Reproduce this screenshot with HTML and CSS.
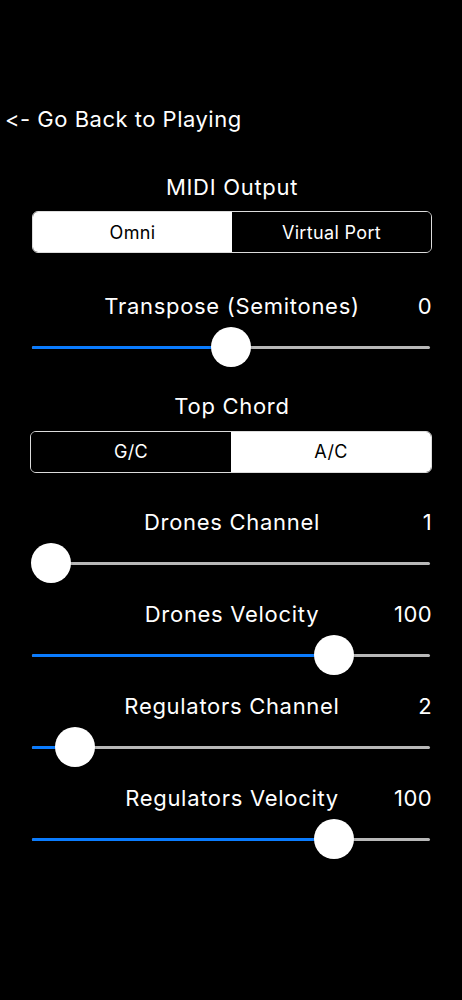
FILE: index.html
```html
<!DOCTYPE html>
<html lang="en">
<head>
<meta charset="utf-8">
<title>Settings</title>
<link rel="stylesheet" href="styles.css">
</head>
<body>
<main class="screen">
  <a class="back" href="#">&lt;- Go Back to Playing</a>
  <section class="settings">
    <h2 class="title title-midi">MIDI Output</h2>
    <div class="segmented seg-midi">
      <span class="seg selected">Omni</span>
      <span class="seg">Virtual Port</span>
    </div>

    <div class="field field-first">
      <div class="label-row"><span class="label">Transpose (Semitones)</span><span class="value">0</span></div>
      <div class="slider"><div class="track"></div><div class="fill" style="width:199px"></div><div class="thumb" style="left:179px"></div></div>
    </div>

    <h2 class="title title-chord">Top Chord</h2>
    <div class="segmented seg-chord">
      <span class="seg">G/C</span>
      <span class="seg selected">A/C</span>
    </div>

    <div class="field field-after-seg">
      <div class="label-row"><span class="label">Drones Channel</span><span class="value">1</span></div>
      <div class="slider"><div class="track"></div><div class="fill" style="width:19px"></div><div class="thumb" style="left:-1px"></div></div>
    </div>

    <div class="field">
      <div class="label-row"><span class="label">Drones Velocity</span><span class="value">100</span></div>
      <div class="slider"><div class="track"></div><div class="fill" style="width:302px"></div><div class="thumb" style="left:282px"></div></div>
    </div>

    <div class="field">
      <div class="label-row"><span class="label">Regulators Channel</span><span class="value">2</span></div>
      <div class="slider"><div class="track"></div><div class="fill" style="width:43px"></div><div class="thumb" style="left:23px"></div></div>
    </div>

    <div class="field">
      <div class="label-row"><span class="label">Regulators Velocity</span><span class="value">100</span></div>
      <div class="slider"><div class="track"></div><div class="fill" style="width:302px"></div><div class="thumb" style="left:282px"></div></div>
    </div>
  </section>
</main>
</body>
</html>
```

FILE: styles.css
```css
* { box-sizing: border-box; }
html, body { margin: 0; padding: 0; background: #000; }
body {
  width: 462px;
  min-height: 1000px;
  color: #fff;
  font-family: Inter, "Liberation Sans", sans-serif;
  font-feature-settings: "calt" 0, "liga" 0;
  font-variant-ligatures: none;
  -webkit-font-smoothing: antialiased;
}
.screen {
  display: flex;
  flex-direction: column;
  padding-top: 106px;
}
.back {
  display: block;
  padding-left: 5px;
  font-size: 22px;
  line-height: 26px;
  letter-spacing: 0.5px;
  color: #fff;
  text-decoration: none;
}
.settings {
  display: flex;
  flex-direction: column;
  width: 400px;
  margin-left: 32px;
}
.title {
  margin: 0;
  font-size: 22px;
  font-weight: 400;
  line-height: 26px;
  letter-spacing: 0.7px;
  text-align: center;
}
.title-midi { margin-top: 42px; }
.title-chord { margin-top: 26px; }

.segmented {
  display: flex;
  height: 42px;
  margin-top: 11px;
  border: 1.5px solid #dcdcdc;
  border-radius: 6px;
  overflow: hidden;
}
.seg-chord {
  margin-top: 11.5px;
  margin-left: -2px;
  width: 402px;
}
.seg {
  flex: 1;
  display: flex;
  align-items: center;
  justify-content: center;
  font-size: 18px;
  letter-spacing: 0.35px;
  color: #fff;
  background: #000;
}
.seg.selected {
  background: #fff;
  color: #000;
}

.field {
  display: flex;
  flex-direction: column;
  gap: 8px;
  margin-top: 18px;
}
.field-first { margin-top: 40px; }
.field-after-seg { margin-top: 36.5px; }

.label-row {
  display: grid;
  grid-template-columns: 1fr auto 1fr;
  font-size: 22px;
  line-height: 26px;
  letter-spacing: 0.7px;
}
.label { grid-column: 2; }
.value { grid-column: 3; justify-self: end; letter-spacing: 0.4px; }

.slider {
  position: relative;
  height: 40px;
  display: flex;
  align-items: center;
}
.track {
  width: 398px;
  height: 3px;
  border-radius: 2px;
  background: #b8b8b8;
}
.fill {
  position: absolute;
  left: 0;
  top: 18.5px;
  height: 3px;
  border-radius: 2px;
  background: #0a7cff;
}
.thumb {
  position: absolute;
  top: 0;
  width: 40px;
  height: 40px;
  border-radius: 50%;
  background: #fff;
  box-shadow: 0 1px 3px rgba(0,0,0,0.25);
}
```
